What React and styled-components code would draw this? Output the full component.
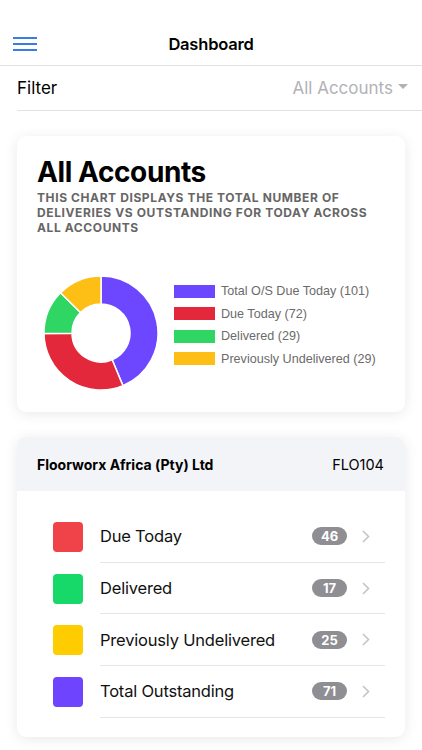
import React from "react";
import styled, { createGlobalStyle } from "styled-components";

const slices = [
  { label: "Total O/S Due Today", value: 101, color: "#6d47ff" },
  { label: "Due Today", value: 72, color: "#e2283a" },
  { label: "Delivered", value: 29, color: "#2fd664" },
  { label: "Previously Undelivered", value: 29, color: "#fdbe15" },
];

const rows = [
  { label: "Due Today", count: 46, color: "#f04249" },
  { label: "Delivered", count: 17, color: "#16d96a" },
  { label: "Previously Undelivered", count: 25, color: "#ffcc00" },
  { label: "Total Outstanding", count: 71, color: "#6f44ff" },
];

function arcPath(cx, cy, r1, r2, a0, a1) {
  const p = (r, a) => [cx + r * Math.sin(a), cy - r * Math.cos(a)];
  const large = a1 - a0 > Math.PI ? 1 : 0;
  const [x0, y0] = p(r2, a0);
  const [x1, y1] = p(r2, a1);
  const [x2, y2] = p(r1, a1);
  const [x3, y3] = p(r1, a0);
  return `M${x0} ${y0} A${r2} ${r2} 0 ${large} 1 ${x1} ${y1} L${x2} ${y2} A${r1} ${r1} 0 ${large} 0 ${x3} ${y3} Z`;
}

function Donut() {
  const total = slices.reduce((s, d) => s + d.value, 0);
  let start = 0;
  return (
    <svg width="116" height="116" viewBox="0 0 116 116">
      {slices.map((s) => {
        const end = start + (s.value / total) * Math.PI * 2;
        const d = arcPath(58, 58, 29, 57, start, end);
        start = end;
        return <path key={s.label} d={d} fill={s.color} stroke="#fff" strokeWidth="1.5" />;
      })}
    </svg>
  );
}

export default function App() {
  return (
    <>
      <GlobalStyle />
      <Page>
        <Header>
          <MenuButton>
            <svg width="24" height="14" viewBox="0 0 24 14">
              <path d="M0 1h24M0 7h24M0 13h24" stroke="#3b7ce4" strokeWidth="2" />
            </svg>
          </MenuButton>
          <Title>Dashboard</Title>
          <span />
        </Header>
        <FilterRow>
          <FilterLabel>Filter</FilterLabel>
          <FilterValue>
            All Accounts
            <Caret />
          </FilterValue>
        </FilterRow>

        <Card>
          <ChartBody>
            <BigTitle>All Accounts</BigTitle>
            <Subtitle>
              This chart displays the total number of deliveries vs outstanding for today across all accounts
            </Subtitle>
            <ChartRow>
              <Donut />
              <Legend>
                {slices.map((s) => (
                  <LegendItem key={s.label}>
                    <LegendSwatch $color={s.color} />
                    {s.label} ({s.value})
                  </LegendItem>
                ))}
              </Legend>
            </ChartRow>
          </ChartBody>
        </Card>

        <Card>
          <AccountHeader>
            <AccountName>Floorworx Africa (Pty) Ltd</AccountName>
            <AccountCode>FLO104</AccountCode>
          </AccountHeader>
          <RowList>
            {rows.map((r) => (
              <Row key={r.label}>
                <Swatch $color={r.color} />
                <RowMain>
                  <RowLabel>{r.label}</RowLabel>
                  <Badge>{r.count}</Badge>
                  <svg width="8" height="13" viewBox="0 0 8 13">
                    <path d="M1 1l5.5 5.5L1 12" fill="none" stroke="#c4c4c9" strokeWidth="1.6" />
                  </svg>
                </RowMain>
              </Row>
            ))}
          </RowList>
        </Card>
      </Page>
    </>
  );
}

const GlobalStyle = createGlobalStyle`
  body {
    margin: 0;
    background: #fff;
    font-family: Inter, "Liberation Sans", sans-serif;
    color: #000;
  }
`;

const Page = styled.div`
  width: 422px;
  padding-bottom: 20px;
`;

const Header = styled.div`
  display: grid;
  grid-template-columns: 1fr auto 1fr;
  align-items: center;
  height: 66px;
  padding-top: 22px;
  box-sizing: border-box;
  border-bottom: 1px solid #e2e2e4;
`;

const MenuButton = styled.div`
  display: flex;
  padding-left: 13px;
`;

const Title = styled.div`
  font-size: 16.5px;
  font-weight: 600;
  letter-spacing: -0.2px;
`;

const FilterRow = styled.div`
  display: flex;
  justify-content: space-between;
  align-items: center;
  height: 44px;
  margin-left: 17px;
  padding-right: 14px;
  border-bottom: 1px solid #e2e2e4;
`;

const FilterLabel = styled.div`
  font-size: 17px;
`;

const FilterValue = styled.div`
  display: flex;
  align-items: center;
  gap: 5px;
  font-size: 17px;
  color: #b2b2b6;
`;

const Caret = styled.span`
  width: 0;
  height: 0;
  margin-top: -4px;
  border-left: 5px solid transparent;
  border-right: 5px solid transparent;
  border-top: 5px solid #b2b2b6;
`;

const Card = styled.div`
  margin: 25px 17px 0;
  background: #fff;
  border-radius: 9px;
  overflow: hidden;
  box-shadow: 0 2px 14px rgba(0, 0, 0, 0.09);
`;

const ChartBody = styled.div`
  padding: 19px 20px 21px;
`;

const BigTitle = styled.div`
  font-size: 28px;
  font-weight: 700;
  line-height: 34px;
  letter-spacing: -0.4px;
`;

const Subtitle = styled.div`
  margin-top: 1px;
  font-size: 12px;
  font-weight: 700;
  line-height: 15px;
  letter-spacing: 0.6px;
  text-transform: uppercase;
  color: #666;
`;

const ChartRow = styled.div`
  display: flex;
  align-items: center;
  margin-top: 40px;
  padding-left: 6px;
`;

const Legend = styled.div`
  display: flex;
  flex-direction: column;
  gap: 8.5px;
  margin-left: 15px;
  margin-top: -16px;
`;

const LegendItem = styled.div`
  display: flex;
  align-items: center;
  gap: 6px;
  white-space: nowrap;
  font-family: "Liberation Sans", Arial, sans-serif;
  font-size: 12.6px;
  line-height: 14px;
  color: #6b6b6b;
`;

const LegendSwatch = styled.span`
  width: 41px;
  height: 13px;
  background: ${(p) => p.$color};
`;

const AccountHeader = styled.div`
  display: flex;
  justify-content: space-between;
  align-items: center;
  height: 54px;
  padding: 0 21px 0 20px;
  background: #f3f4f7;
`;

const AccountName = styled.div`
  font-size: 14px;
  font-weight: 700;
`;

const AccountCode = styled.div`
  font-size: 14.5px;
`;

const RowList = styled.div`
  padding: 20px 20px 19px 36px;
`;

const Row = styled.div`
  display: flex;
  align-items: center;
  gap: 17px;
  height: 51.7px;
`;

const Swatch = styled.span`
  flex: none;
  width: 30px;
  height: 30px;
  border-radius: 4px;
  background: ${(p) => p.$color};
`;

const RowMain = styled.div`
  flex: 1;
  display: flex;
  align-items: center;
  align-self: stretch;
  gap: 15px;
  border-bottom: 1px solid #e6e6e8;
  padding-right: 15px;
`;

const RowLabel = styled.div`
  flex: 1;
  font-size: 16.5px;
  letter-spacing: -0.2px;
  color: #111;
`;

const Badge = styled.span`
  min-width: 23px;
  height: 18px;
  padding: 0 6px;
  border-radius: 9px;
  background: #8e8e93;
  color: #fff;
  font-size: 13px;
  font-weight: 700;
  line-height: 18px;
  text-align: center;
`;
